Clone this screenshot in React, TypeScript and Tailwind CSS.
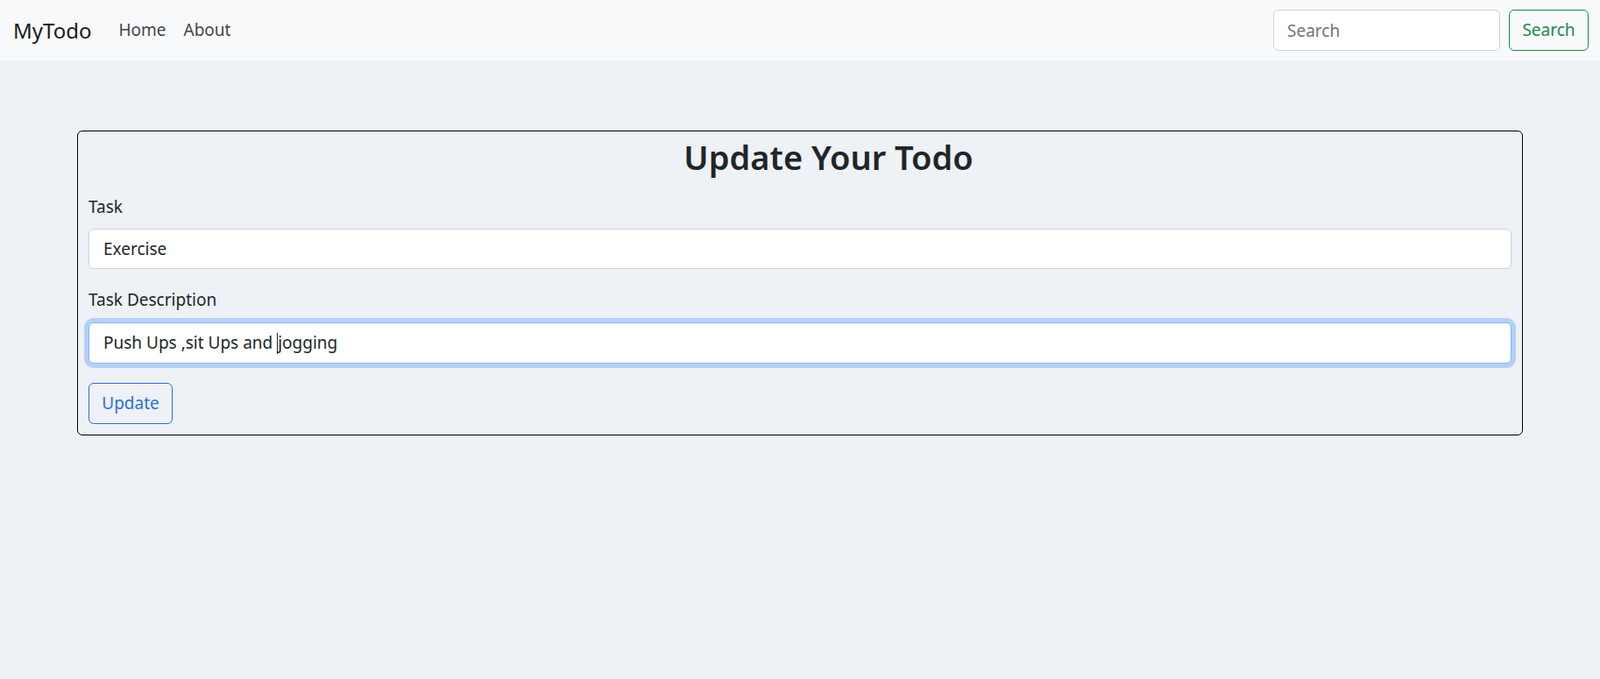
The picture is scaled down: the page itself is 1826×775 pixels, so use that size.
import React from 'react';

const font = { fontFamily: '"Noto Sans", "Open Sans", sans-serif' };

function Navbar() {
  return (
    <nav className="flex h-[69px] items-center justify-between bg-[#f8f9fa] pl-[15px] pr-[13px]">
      <div className="flex items-center">
        <a href="#" className="mr-[21px] text-[24px] text-[#1a1a1a]">
          MyTodo
        </a>
        <ul className="flex items-center text-[19px] text-[#454545]">
          <li>
            <a href="#" className="block px-[10px] py-[8px]">
              Home
            </a>
          </li>
          <li>
            <a href="#" className="block px-[10px] py-[8px]">
              About
            </a>
          </li>
        </ul>
      </div>
      <form className="flex items-center gap-[10px]">
        <input
          type="search"
          placeholder="Search"
          className="h-[47px] w-[259px] rounded-[6px] border border-[#ced4da] bg-white px-[15px] text-[19px] text-[#212529] placeholder:text-[#6c757d] outline-none"
        />
        <button
          type="button"
          className="h-[47px] w-[91px] rounded-[6px] border border-[#198754] text-[19px] text-[#198754]"
        >
          Search
        </button>
      </form>
    </nav>
  );
}

export default function App() {
  return (
    <div style={font} className="min-h-[775px] bg-[#eef1f6] text-[#212529]">
      <Navbar />
      <div className="mx-auto mt-[80px] w-[1650px] rounded-[6px] border border-black px-[12px] pb-[12px] pt-[4px]">
        <h2 className="pl-[65px] text-center text-[38px] font-semibold leading-[50px]">
          Update Your Todo
        </h2>
        <form className="mt-[18px]">
          <div className="mb-[21px]">
            <label className="mb-[10px] block text-[19px] leading-[29px]">Task</label>
            <input
              type="text"
              defaultValue="Exercise"
              className="h-[46px] w-full rounded-[6px] border border-[#ced4da] bg-white px-[16px] text-[19px] outline-none"
            />
          </div>
          <div className="mb-[22px]">
            <label className="mb-[11px] block text-[19px] leading-[29px]">Task Description</label>
            <div
              role="textbox"
              className="flex h-[47px] w-full items-center rounded-[6px] border border-[#86b7fe] bg-white px-[16px] text-[19px] shadow-[0_0_0_5px_rgba(13,110,253,0.25)]"
            >
              <span className="whitespace-pre">Push Ups ,sit Ups and </span>
              <span className="inline-block h-[24px] w-px bg-[#212529]" />
              <span>jogging</span>
            </div>
          </div>
          <button
            type="button"
            className="h-[47px] w-[96px] rounded-[6px] border border-[#2b6fdc] text-[19px] text-[#2b6fdc]"
          >
            Update
          </button>
        </form>
      </div>
    </div>
  );
}
